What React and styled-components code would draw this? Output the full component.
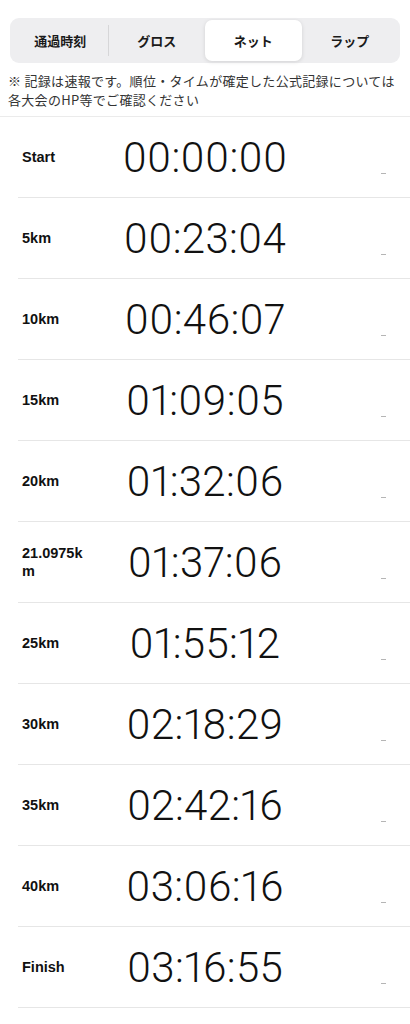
import React from "react";
import styled, { createGlobalStyle } from "styled-components";

const Global = createGlobalStyle`
  html, body { margin: 0; padding: 0; background: #fff; }
  body { font-family: "Liberation Sans", "Noto Sans CJK JP", sans-serif; color: #111; }
`;

const Page = styled.div`
  width: 410px;
  padding-top: 18px;
`;

const Segmented = styled.div`
  margin: 0 10px;
  height: 45px;
  background: #eeeef0;
  border-radius: 9px;
  display: grid;
  grid-template-columns: repeat(4, 1fr);
  padding: 2px;
  box-sizing: border-box;
`;

const Seg = styled.div`
  position: relative;
  display: flex;
  align-items: center;
  justify-content: center;
  font-family: "Noto Sans CJK JP", sans-serif;
  font-size: 13px;
  font-weight: 700;
  color: #1a1a1a;
  border-radius: 7px;
  background: ${(p) => (p.$active ? "#fff" : "transparent")};
  box-shadow: ${(p) => (p.$active ? "0 1px 4px rgba(0,0,0,0.12)" : "none")};
  &::after {
    content: "";
    display: ${(p) => (p.$divider ? "block" : "none")};
    position: absolute;
    right: 0;
    top: 5px;
    bottom: 5px;
    width: 1px;
    background: #d6d6d8;
  }
`;

const Note = styled.p`
  margin: 8px 0 0;
  padding: 0 12px 0 8px;
  font-family: "Noto Sans CJK JP", sans-serif;
  font-size: 13px;
  line-height: 19px;
  color: #333;
  letter-spacing: 0.3px;
`;

const List = styled.div`
  margin-top: 7px;
  border-top: 1px solid #ebebeb;
`;

const Row = styled.div`
  margin-left: 18px;
  height: 80px;
  border-bottom: 1px solid #e6e6e6;
  display: grid;
  grid-template-columns: 70px 1fr 92px;
  padding-left: 4px;
  align-items: center;
`;

const Label = styled.div`
  font-family: "Liberation Sans", "Noto Sans CJK JP", sans-serif;
  font-weight: 700;
  font-size: 14.5px;
  line-height: 18px;
  color: #111;
  word-break: break-all;
`;

const Time = styled.div`
  text-align: center;
  font-family: Roboto, "Liberation Sans", sans-serif;
  font-weight: 300;
  font-size: 42px;
  font-variant-numeric: proportional-nums;
  font-feature-settings: "pnum" 1;
  letter-spacing: 0.3px;
  color: #111;
  line-height: 1;
  margin-top: 1px;
`;

const Dash = styled.div`
  align-self: end;
  justify-self: end;
  margin-right: 24px;
  margin-bottom: 23px;
  width: 5px;
  height: 1px;
  background: #b5b5b5;
`;

const data = [
  ["Start", "00:00:00"],
  ["5km", "00:23:04"],
  ["10km", "00:46:07"],
  ["15km", "01:09:05"],
  ["20km", "01:32:06"],
  ["21.0975km", "01:37:06"],
  ["25km", "01:55:12"],
  ["30km", "02:18:29"],
  ["35km", "02:42:16"],
  ["40km", "03:06:16"],
  ["Finish", "03:16:55"],
];

export default function App() {
  return (
    <Page>
      <Global />
      <Segmented>
        <Seg $divider>通過時刻</Seg>
        <Seg>グロス</Seg>
        <Seg $active>ネット</Seg>
        <Seg>ラップ</Seg>
      </Segmented>
      <Note>
        ※ 記録は速報です。順位・タイムが確定した公式記録については各大会のHP等でご確認ください
      </Note>
      <List>
        {data.map(([label, time]) => (
          <Row key={label}>
            <Label>{label}</Label>
            <Time>{time}</Time>
            <Dash aria-label="-" />
          </Row>
        ))}
      </List>
    </Page>
  );
}
